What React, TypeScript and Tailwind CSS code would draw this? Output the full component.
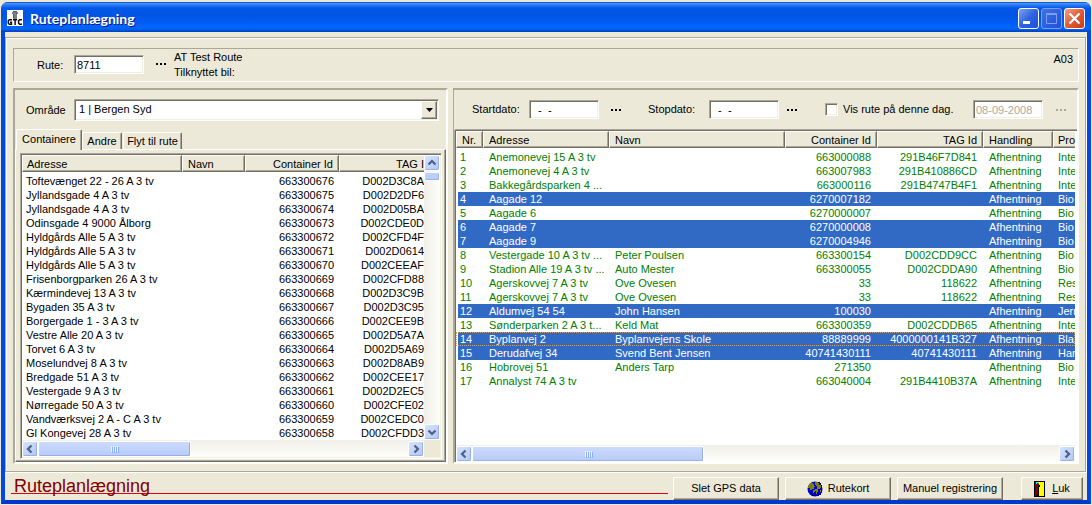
import type { ReactNode } from 'react'
import clsx from 'clsx'

type ContainerRow = { address: string; name?: string; id: string; tag: string }

type RouteRow = {
  nr: number
  address: string
  name?: string
  id: string
  tag?: string
  product: string
  selected?: boolean
  focused?: boolean
}

const containers: ContainerRow[] = [
  { address: 'Toftevænget 22 - 26 A 3 tv', id: '663300676', tag: 'D002D3C8A' },
  { address: 'Jyllandsgade 4 A 3 tv', id: '663300675', tag: 'D002D2DF6' },
  { address: 'Jyllandsgade 4 A 3 tv', id: '663300674', tag: 'D002D05BA' },
  { address: 'Odinsgade 4 9000 Ålborg', id: '663300673', tag: 'D002CDE0D' },
  { address: 'Hyldgårds Alle 5 A 3 tv', id: '663300672', tag: 'D002CFD4F' },
  { address: 'Hyldgårds Alle 5 A 3 tv', id: '663300671', tag: 'D002D0614' },
  { address: 'Hyldgårds Alle 5 A 3 tv', id: '663300670', tag: 'D002CEEAF' },
  { address: 'Frisenborgparken 26 A 3 tv', id: '663300669', tag: 'D002CFD88' },
  { address: 'Kærmindevej 13 A 3 tv', id: '663300668', tag: 'D002D3C9B' },
  { address: 'Bygaden 35 A 3 tv', id: '663300667', tag: 'D002D3C95' },
  { address: 'Borgergade 1 - 3 A 3 tv', id: '663300666', tag: 'D002CEE9B' },
  { address: 'Vestre Alle 20 A 3 tv', id: '663300665', tag: 'D002D5A7A' },
  { address: 'Torvet 6 A 3 tv', id: '663300664', tag: 'D002D5A69' },
  { address: 'Moselundvej 8 A 3 tv', id: '663300663', tag: 'D002D8AB9' },
  { address: 'Bredgade 51 A 3 tv', id: '663300662', tag: 'D002CEE17' },
  { address: 'Vestergade 9 A 3 tv', id: '663300661', tag: 'D002D2EC5' },
  { address: 'Nørregade 50 A 3 tv', id: '663300660', tag: 'D002CFE02' },
  { address: 'Vandværksvej 2 A - C A 3 tv', id: '663300659', tag: 'D002CEDC0' },
  { address: 'Gl Kongevej 28 A 3 tv', id: '663300658', tag: 'D002CFDD3' },
]

const route: RouteRow[] = [
  { nr: 1, address: 'Anemonevej 15 A 3 tv', id: '663000088', tag: '291B46F7D841', product: 'Inte' },
  { nr: 2, address: 'Anemonevej 4 A 3 tv', id: '663007983', tag: '291B410886CD', product: 'Inte' },
  { nr: 3, address: 'Bakkegårdsparken 4 ...', id: '663000116', tag: '291B4747B4F1', product: 'Inte' },
  { nr: 4, address: 'Aagade 12', id: '6270007182', product: 'Bio', selected: true },
  { nr: 5, address: 'Aagade 6', id: '6270000007', product: 'Bio' },
  { nr: 6, address: 'Aagade 7', id: '6270000008', product: 'Bio', selected: true },
  { nr: 7, address: 'Aagade 9', id: '6270004946', product: 'Bio', selected: true },
  { nr: 8, address: 'Vestergade 10 A 3 tv ...', name: 'Peter Poulsen', id: '663300154', tag: 'D002CDD9CC', product: 'Bio' },
  { nr: 9, address: 'Stadion Alle 19 A 3 tv ...', name: 'Auto Mester', id: '663300055', tag: 'D002CDDA90', product: 'Bio' },
  { nr: 10, address: 'Agerskovvej 7 A 3 tv', name: 'Ove Ovesen', id: '33', tag: '118622', product: 'Res' },
  { nr: 11, address: 'Agerskovvej 7 A 3 tv', name: 'Ove Ovesen', id: '33', tag: '118622', product: 'Res' },
  { nr: 12, address: 'Aldumvej 54 54', name: 'John Hansen', id: '100030', product: 'Jern', selected: true },
  { nr: 13, address: 'Sønderparken 2 A 3 t...', name: 'Keld Mat', id: '663300359', tag: 'D002CDDB65', product: 'Inte' },
  { nr: 14, address: 'Byplanvej 2', name: 'Byplanvejens Skole', id: '88889999', tag: '4000000141B327', product: 'Bla', selected: true, focused: true },
  { nr: 15, address: 'Derudafvej 34', name: 'Svend Bent Jensen', id: '40741430111', tag: '40741430111', product: 'Han', selected: true },
  { nr: 16, address: 'Hobrovej 51', name: 'Anders Tarp', id: '271350', product: 'Bio' },
  { nr: 17, address: 'Annalyst 74 A 3 tv', id: '663040004', tag: '291B4410B37A', product: 'Inte' },
]

// the classic two-step 3D edges
const sunken =
  'border border-t-[#aca899] border-l-[#aca899] border-b-white border-r-white shadow-[inset_1px_1px_0_#716f64,inset_-1px_-1px_0_#f1efe2]'
const raised =
  'border border-t-white border-l-white border-b-[#716f64] border-r-[#716f64] shadow-[inset_-1px_-1px_0_#aca899]'

const field = clsx(sunken, 'h-[19px] w-[70px] bg-white pl-[2px] text-[11px] leading-[14px] outline-none')

function MoreButton({ label, disabled }: { label: string; disabled?: boolean }) {
  const dot = clsx('h-[2px] w-[2px]', disabled ? 'bg-[#aca899]' : 'bg-black')
  return (
    <button type="button" aria-label={label} disabled={disabled} className="flex h-4 w-3 shrink-0 items-center justify-center gap-[2px]">
      <span className={dot} />
      <span className={dot} />
      <span className={dot} />
    </button>
  )
}

function PushButton({ children, className }: { children: ReactNode; className: string }) {
  return (
    <button type="button" className={clsx(raised, 'flex h-[23px] shrink-0 items-center justify-center bg-[#ece9d8]', className)}>
      {children}
    </button>
  )
}

function HeaderCell({ children, right, className }: { children?: ReactNode; right?: boolean; className?: string }) {
  return (
    <th
      scope="col"
      className={clsx(
        raised,
        'h-[17px] overflow-hidden whitespace-nowrap bg-[#ece9d8] p-0 px-[5px] font-normal leading-[14px]',
        right ? 'text-right' : 'text-left',
        className,
      )}
    >
      {children}
    </th>
  )
}

const arrows = {
  left: 'M6.5 1.5 3 5l3.5 3.5',
  right: 'M3.5 1.5 7 5 3.5 8.5',
  up: 'M1.5 6.5 5 3l3.5 3.5',
  down: 'M1.5 3.5 5 7l3.5-3.5',
}

function ScrollButton({ dir }: { dir: keyof typeof arrows }) {
  return (
    <button
      type="button"
      aria-label={`Rul ${dir}`}
      className="flex h-4 w-4 shrink-0 items-center justify-center rounded-[2px] border border-white bg-gradient-to-br from-[#d6e2fe] to-[#b4c8f6] shadow-[inset_-1px_-1px_0_#98b0e8]"
    >
      <svg width="10" height="10" viewBox="0 0 10 10" fill="none" stroke="#4d6185" strokeWidth="2.2">
        <path d={arrows[dir]} />
      </svg>
    </button>
  )
}

function HorizontalScroll({ thumb }: { thumb: string }) {
  return (
    <div className="flex h-[17px] min-w-0 flex-1 items-center bg-gradient-to-b from-[#f0efe8] to-[#fefefb]">
      <ScrollButton dir="left" />
      <div
        className={clsx(
          'flex h-4 items-center justify-center gap-px rounded-[2px] border border-white bg-gradient-to-b from-[#ccdafe] to-[#b8cbf8] shadow-[inset_-1px_-1px_0_#98b0e8]',
          thumb,
        )}
      >
        {[0, 1, 2, 3].map((i) => (
          <span key={i} className="h-[6px] w-px bg-[#eef4fe] shadow-[1px_1px_0_#8cb0f8]" />
        ))}
      </div>
      <div className="flex-1" />
      <ScrollButton dir="right" />
    </div>
  )
}

function TitleBar() {
  return (
    <header className="-mx-1 flex h-[30px] items-center rounded-t-[7px] bg-[linear-gradient(180deg,#0a3fc8_0%,#3c90ff_5%,#2a7cf5_10%,#0458e8_20%,#0054e3_45%,#005df5_70%,#0066ff_84%,#0062f4_90%,#0040b8_100%)] px-[6px] pt-[2px]">
      <svg width="16" height="16" viewBox="0 0 16 16" aria-hidden="true">
        <path fill="#fff" d="M0 0h16v16H0z" />
        <path fill="#808080" d="M5 2h6v2h-1v5H6V4H5z" />
        <path fill="#555" d="M6 1h4v1H6zM6 4h1v4H6zM9 3h1v1H9z" />
        <path
          fill="none"
          stroke="#111"
          strokeWidth="1.5"
          d="M5 9.8H2.3L1.3 10.8v2.4l1 1H4.4v-2H3M6 9.8h4.2M8.1 9.8V15M15 9.8h-2.4l-1 1v2.4l1 1H15"
        />
      </svg>
      <h1 className="ml-[7px] pt-[2px] font-['Lato','Open_Sans',sans-serif] text-[14px] font-bold leading-[18px] text-white [text-shadow:1px_1px_0_#0a1883]">
        Ruteplanlægning
      </h1>
      <div className="ml-auto flex gap-[2px]">
        <button type="button" aria-label="Minimer" className="h-[21px] w-[21px] rounded-[3px] border border-white bg-gradient-to-br from-[#7fa2f3] via-[#2f62e0] to-[#1c50d8]">
          <svg width="19" height="19" viewBox="0 0 19 19">
            <path fill="#fff" d="M4 12h7v3H4z" />
          </svg>
        </button>
        <button type="button" aria-label="Maksimer" disabled className="h-[21px] w-[21px] rounded-[3px] border border-[#7e9ff0] bg-gradient-to-br from-[#3f70e6] to-[#1c50d8]">
          <svg width="19" height="19" viewBox="0 0 19 19" fill="none" stroke="#7e9ff0">
            <path d="M4.5 4.5h10v10h-10zM4 5.5h11" />
          </svg>
        </button>
        <button type="button" aria-label="Luk vindue" className="h-[21px] w-[21px] rounded-[3px] border border-white bg-gradient-to-br from-[#f0a088] via-[#e25a36] to-[#c83a10]">
          <svg width="19" height="19" viewBox="0 0 19 19" stroke="#fff" strokeWidth="2.3">
            <path d="m4.5 4.5 10 10m0-10-10 10" />
          </svg>
        </button>
      </div>
    </header>
  )
}

function RouteBar() {
  return (
    <section className="flex h-[34px] border border-t-[#aca899] border-l-[#aca899] border-b-white border-r-white pl-[23px] pr-[5px]">
      <label htmlFor="rute" className="mt-[9px] w-[37px] leading-[14px]">
        Rute:
      </label>
      <input id="rute" defaultValue="8711" className={clsx(field, 'mt-[6px]')} />
      <div className="ml-[11px] mt-[7px]">
        <MoreButton label="Vælg rute" />
      </div>
      <div className="ml-[7px] mt-px leading-[15px]">
        <p>AT Test Route</p>
        <p>Tilknyttet bil:</p>
      </div>
      <p className="ml-auto mt-[3px] leading-[14px]">A03</p>
    </section>
  )
}

function ContainerPanel() {
  const tab = 'relative border border-b-0 border-t-white border-l-white border-r-[#716f64] rounded-t-[2px] bg-[#ece9d8] shadow-[inset_-1px_0_0_#aca899]'
  return (
    <section className="flex w-[435px] shrink-0 flex-col border-2 border-t-[#aca899] border-l-[#aca899] border-b-white border-r-white">
      <div className="flex h-[39px] items-start pl-[11px] pt-[9px]">
        <label htmlFor="omraade" className="mt-[4px] w-12 leading-[14px]">
          Område
        </label>
        <div className={clsx(sunken, 'flex h-[22px] w-[365px] bg-white p-px')}>
          <select id="omraade" className="min-w-0 flex-1 appearance-none bg-transparent pb-[2px] pl-[3px] text-[11px] leading-[14px] outline-none">
            <option>1 | Bergen Syd</option>
          </select>
          <span className={clsx(raised, 'pointer-events-none flex w-4 items-center justify-center bg-[#ece9d8]')}>
            <svg width="7" height="4" viewBox="0 0 7 4">
              <path d="M0 0h7L3.5 4z" />
            </svg>
          </span>
        </div>
      </div>

      <div role="tablist" className="flex h-5 items-end pl-px">
        <button type="button" role="tab" aria-selected="true" className={clsx(tab, 'z-10 -mb-px h-[21px] w-[66px] pb-[2px]')}>
          Containere
        </button>
        <button type="button" role="tab" aria-selected="false" className={clsx(tab, 'h-[17px] w-[40px]')}>
          Andre
        </button>
        <button type="button" role="tab" aria-selected="false" className={clsx(tab, 'ml-px h-[17px] w-[59px]')}>
          Flyt til rute
        </button>
      </div>

      <div className={clsx(raised, 'flex flex-1 flex-col pb-[2px] pl-[4px] pr-[3px] pt-[3px]')}>
        <div className={clsx(sunken, 'flex flex-1 flex-col bg-white p-px')}>
          <div className="flex min-h-0 flex-1">
            <div className="min-w-0 flex-1 overflow-hidden">
              <table className="w-full table-fixed border-separate border-spacing-0">
                <colgroup>
                  <col className="w-[160px]" />
                  <col className="w-[63px]" />
                  <col className="w-[94px]" />
                  <col />
                </colgroup>
                <thead>
                  <tr>
                    <HeaderCell className="pl-[4px]">Adresse</HeaderCell>
                    <HeaderCell>Navn</HeaderCell>
                    <HeaderCell right>Container Id</HeaderCell>
                    <HeaderCell right className="border-r-0 pr-0 shadow-[inset_0_-1px_0_#aca899]">
                      TAG I
                    </HeaderCell>
                  </tr>
                </thead>
                <tbody className="before:block before:h-[2px]">
                  {containers.map((row) => (
                    <tr key={row.id} className="whitespace-nowrap leading-[14px]">
                      <td className="p-0 pl-[4px]">{row.address}</td>
                      <td className="p-0 pl-[6px]">{row.name}</td>
                      <td className="p-0 pr-[5px] text-right">{row.id}</td>
                      <td className="p-0 text-right">{row.tag}</td>
                    </tr>
                  ))}
                </tbody>
              </table>
            </div>
            <div className="flex w-4 flex-col bg-gradient-to-r from-[#f0efe8] to-[#fefefb]">
              <ScrollButton dir="up" />
              <div className="mt-px h-[9px] rounded-[2px] border border-white bg-[#bccffa] shadow-[inset_-1px_-1px_0_#98b0e8]" />
              <div className="flex-1" />
              <ScrollButton dir="down" />
            </div>
          </div>
          <div className="flex">
            <HorizontalScroll thumb="w-[153px]" />
            <div className="w-4 bg-[#ece9d8]" />
          </div>
        </div>
      </div>
    </section>
  )
}

function RoutePanel() {
  return (
    <section className="ml-[5px] flex min-w-0 flex-1 flex-col border-2 border-l border-t-[#aca899] border-l-[#aca899] border-b-white border-r-white">
      <div className="flex h-10 shrink-0 items-center whitespace-nowrap pb-px pl-[18px]">
        <label htmlFor="startdato" className="w-[57px] shrink-0">
          Startdato:
        </label>
        <input id="startdato" defaultValue="  -  -" className={clsx(field, 'shrink-0')} />
        <div className="ml-[11px]">
          <MoreButton label="Vælg startdato" />
        </div>
        <label htmlFor="stopdato" className="ml-[26px] w-[61px] shrink-0">
          Stopdato:
        </label>
        <input id="stopdato" defaultValue="  -  -" className={clsx(field, 'shrink-0')} />
        <div className="ml-[7px]">
          <MoreButton label="Vælg stopdato" />
        </div>
        <label className="ml-[27px] flex w-[148px] shrink-0 items-center gap-[5px]">
          <input type="checkbox" className={clsx(sunken, 'h-[13px] w-[13px] shrink-0 appearance-none bg-white')} />
          Vis rute på denne dag.
        </label>
        <input aria-label="Dato" disabled defaultValue="08-09-2008" className={clsx(field, 'shrink-0 text-[#aca899]')} />
        <div className="ml-[12px]">
          <MoreButton label="Vælg dato" disabled />
        </div>
      </div>

      <div className="ml-px flex min-h-0 flex-1 flex-col border border-b-0 border-r-0 border-t-[#716f64] border-l-[#716f64] bg-white shadow-[0_-1px_0_#aca899,-1px_0_0_#aca899]">
        <div className="mr-[2px] flex-1 overflow-hidden">
          <table className="w-full table-fixed border-separate border-spacing-0">
            <colgroup>
              <col className="w-[27px]" />
              <col className="w-[126px]" />
              <col className="w-[176px]" />
              <col className="w-[92px]" />
              <col className="w-[106px]" />
              <col className="w-[70px]" />
              <col />
            </colgroup>
            <thead>
              <tr>
                <HeaderCell>Nr.</HeaderCell>
                <HeaderCell>Adresse</HeaderCell>
                <HeaderCell>Navn</HeaderCell>
                <HeaderCell right>Container Id</HeaderCell>
                <HeaderCell right>TAG Id</HeaderCell>
                <HeaderCell>Handling</HeaderCell>
                <HeaderCell className="border-r-0 pl-[4px] pr-0 shadow-[inset_0_-1px_0_#aca899]">Pro</HeaderCell>
              </tr>
            </thead>
            <tbody className="before:block before:h-[2px]">
              {route.map((row) => {
                const cell = clsx('overflow-hidden p-0', row.selected && 'bg-[#316ac5]')
                return (
                  <tr
                    key={row.nr}
                    className={clsx(
                      'whitespace-nowrap leading-[14px]',
                      row.selected ? 'text-white' : 'text-[#008000]',
                      row.focused && 'outline-1 -outline-offset-1 outline-dotted outline-[#e0a050]',
                    )}
                  >
                    <td className={clsx('border-l-2 border-white py-0 pl-[2px] pr-0', row.selected && 'bg-[#316ac5]')}>{row.nr}</td>
                    <td className={clsx(cell, 'pl-[6px]')}>{row.address}</td>
                    <td className={clsx(cell, 'pl-[6px]')}>{row.name}</td>
                    <td className={clsx(cell, 'pr-[6px] text-right')}>{row.id}</td>
                    <td className={clsx(cell, 'pr-[6px] text-right')}>{row.tag}</td>
                    <td className={clsx(cell, 'pl-[6px]')}>Afhentning</td>
                    <td className={clsx(cell, 'pl-[5px]')}>{row.product}</td>
                  </tr>
                )
              })}
            </tbody>
          </table>
        </div>
        <div className="mr-[2px] flex">
          <HorizontalScroll thumb="w-[232px]" />
        </div>
      </div>
    </section>
  )
}

function Footer() {
  return (
    <footer className="flex h-7 items-start pl-[6px] pr-[4px] pt-[5px]">
      <div className="min-w-0 flex-1 border-b border-[#e00000] pl-[3px]">
        <h2 className="h-[16px] text-[18px] leading-[18px] text-[#800000]">Ruteplanlægning</h2>
      </div>
      <PushButton className="ml-[5px] w-[106px]">Slet GPS data</PushButton>
      <PushButton className="ml-[6px] w-[106px] gap-[5px]">
        <svg width="16" height="16" viewBox="0 0 16 16" aria-hidden="true">
          <circle cx="8" cy="8" r="7.5" fill="#0000d8" />
          <path fill="#000070" d="M11 1h2v1h1v2h1v8h-1v2h-2v1h-2v-1h2v-2h2V4h-1V3h-2zM4 13h2v1h3v1H5z" />
          <path fill="#808000" d="M2 3h1V2h3v1h1v2h1v1H7v2H5v1H3V7H1V5h1zM8 1h3v1h1v2h2v3h-1v1h-2v3h-1v2H9v-3H8V8h2V5H9V4H8zM6 9h2v2H7v1H6zM13 9h1v2h-1z" />
        </svg>
        Rutekort
      </PushButton>
      <PushButton className="ml-[6px] w-[106px]">Manuel registrering</PushButton>
      <PushButton className="ml-[18px] w-[62px] gap-[7px]">
        <svg width="11" height="16" viewBox="0 0 11 16" aria-hidden="true">
          <path d="M0 0h11v16H0z" />
          <path fill="#ff0" d="M4 1h6v14H5z" />
          <path fill="#800000" d="M1 1h2l2 2v9l-3 3H1z" />
          <path fill="#0ff" d="M2 1h2v1H3v1H2z" />
          <path d="M4 4h2v2H5v6l-1 2z" />
        </svg>
        <span>
          <u>L</u>uk
        </span>
      </PushButton>
    </footer>
  )
}

export default function App() {
  return (
    <main className="flex min-h-screen min-w-[1000px] cursor-default flex-col bg-[#ece9d8] px-px pb-px pt-[2px] font-['Liberation_Sans',Arial,sans-serif] text-[11px] text-black">
      <div className="flex flex-1 flex-col rounded-t-[7px] border-4 border-t-0 border-[#0048e0] border-b-[#0038c8] bg-[#ece9d8]">
        <TitleBar />
        <div className="mr-px mt-[5px] flex flex-1 flex-col gap-[6px] border border-[#aca899] pb-[7px] pl-[7px] pr-[6px] pt-[10px] shadow-[inset_1px_1px_0_#fff,1px_1px_0_#fff]">
          <RouteBar />
          <div className="flex flex-1">
            <ContainerPanel />
            <RoutePanel />
          </div>
        </div>
        <Footer />
      </div>
    </main>
  )
}
